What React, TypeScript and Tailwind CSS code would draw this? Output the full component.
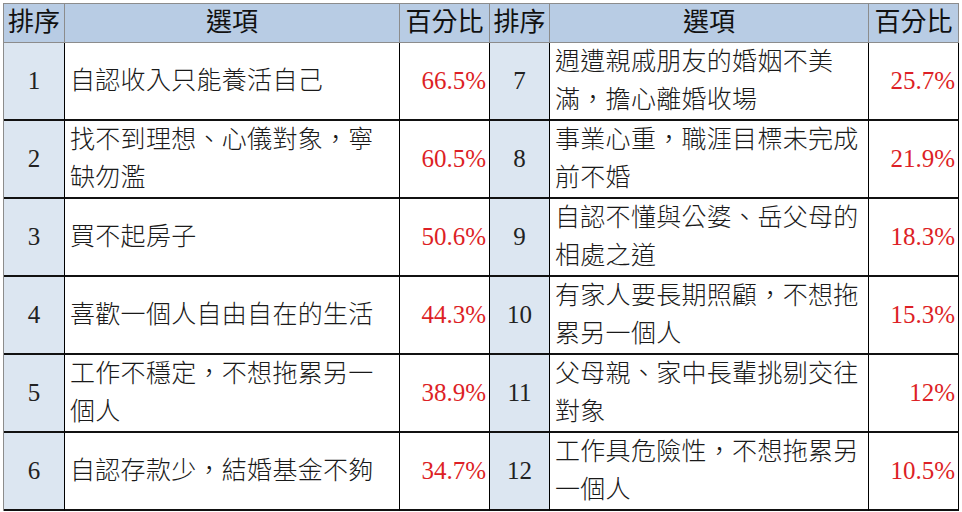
import React from "react";

interface Row {
  rank: number;
  text: string[];
  pct: string;
}

const left: Row[] = [
  { rank: 1, text: ["自認收入只能養活自己"], pct: "66.5%" },
  { rank: 2, text: ["找不到理想、心儀對象，寧", "缺勿濫"], pct: "60.5%" },
  { rank: 3, text: ["買不起房子"], pct: "50.6%" },
  { rank: 4, text: ["喜歡一個人自由自在的生活"], pct: "44.3%" },
  { rank: 5, text: ["工作不穩定，不想拖累另一", "個人"], pct: "38.9%" },
  { rank: 6, text: ["自認存款少，結婚基金不夠"], pct: "34.7%" },
];

const right: Row[] = [
  { rank: 7, text: ["週遭親戚朋友的婚姻不美", "滿，擔心離婚收場"], pct: "25.7%" },
  { rank: 8, text: ["事業心重，職涯目標未完成", "前不婚"], pct: "21.9%" },
  { rank: 9, text: ["自認不懂與公婆、岳父母的", "相處之道"], pct: "18.3%" },
  { rank: 10, text: ["有家人要長期照顧，不想拖", "累另一個人"], pct: "15.3%" },
  { rank: 11, text: ["父母親、家中長輩挑剔交往", "對象"], pct: "12%" },
  { rank: 12, text: ["工作具危險性，不想拖累另", "一個人"], pct: "10.5%" },
];

const cjk = { fontFamily: '"Liberation Serif", "Noto Sans CJK TC", serif' };

const HeadCell: React.FC<{ label: string }> = ({ label }) => (
  <div className="h-[39px] flex items-center justify-center bg-[#b8cce4] border-r border-b border-[#8c8c8c] text-[26px] text-[#111] leading-none">
    {label}
  </div>
);

const BodyCells: React.FC<{ row: Row }> = ({ row }) => (
  <>
    <div className="h-[78px] flex items-center justify-center bg-[#dce6f1] border-r border-r-black border-b-[2px] border-b-[#111] text-[25px] text-[#222] font-['Liberation_Serif',serif]">
      {row.rank}
    </div>
    <div className="h-[78px] flex flex-col justify-center pl-[5px] border-r border-r-black border-b-[2px] border-b-[#111] text-[25px] leading-[38px] text-[#1a1a1a] font-light">
      {row.text.map((t, i) => (
        <span key={i} className="whitespace-nowrap tracking-[0.3px]">{t}</span>
      ))}
    </div>
    <div className="h-[78px] flex items-center justify-end pr-[3px] border-r border-r-black border-b-[2px] border-b-[#111] text-[25px] text-[#dd1f26] font-['Liberation_Serif',serif]">
      {row.pct}
    </div>
  </>
);

export default function App() {
  return (
    <div className="w-[962px] h-[512px] bg-white pt-[3px] pl-[3px]" style={cjk}>
      <div className="grid grid-cols-[61px_335px_90px_60px_319px_90px] w-fit border-l border-t border-l-[#8c8c8c] border-t-[#8c8c8c]">
        <HeadCell label="排序" />
        <HeadCell label="選項" />
        <HeadCell label="百分比" />
        <HeadCell label="排序" />
        <HeadCell label="選項" />
        <HeadCell label="百分比" />
        {left.map((r, i) => (
          <React.Fragment key={r.rank}>
            <BodyCells row={r} />
            <BodyCells row={right[i]} />
          </React.Fragment>
        ))}
      </div>
    </div>
  );
}
